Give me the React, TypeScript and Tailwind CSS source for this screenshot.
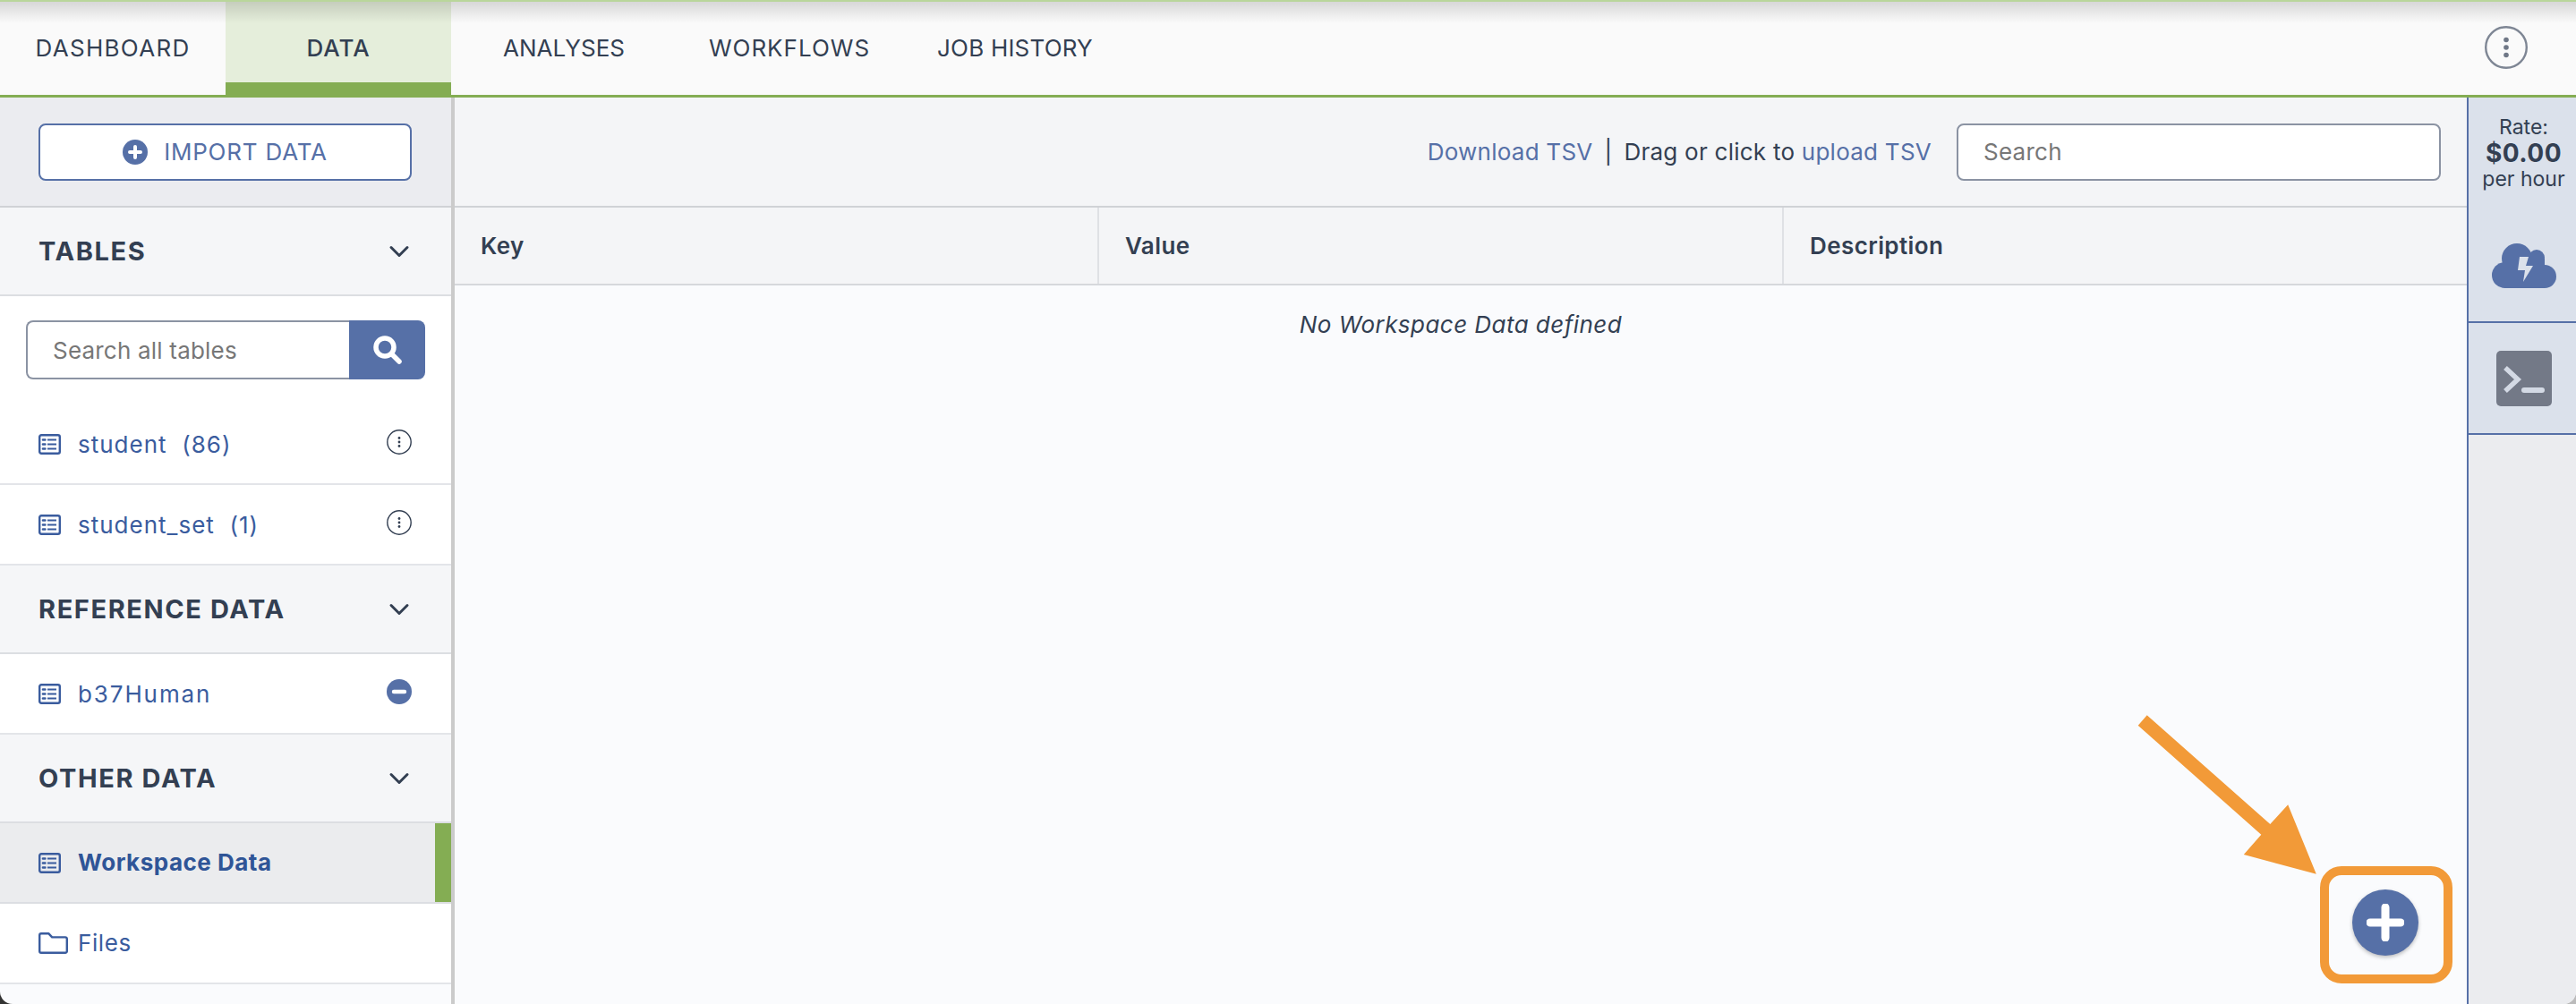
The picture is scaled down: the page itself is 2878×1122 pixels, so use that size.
import React from 'react';
import { ChevronDown } from 'lucide-react';

const font = { fontFamily: 'Inter, "Liberation Sans", sans-serif' };

const tabs = [
  { label: 'DASHBOARD', spacing: 'tracking-[1.3px]' },
  { label: 'DATA', spacing: 'tracking-[1px]' },
  { label: 'ANALYSES', spacing: 'tracking-[0px]' },
  { label: 'WORKFLOWS', spacing: 'tracking-[1px]' },
  { label: 'JOB HISTORY', spacing: 'tracking-[0.2px]' },
];

const TableIcon = () => (
  <svg className="w-[25px] h-[23px] shrink-0" viewBox="0 0 25 23" fill="none" stroke="#3a5c9e">
    <rect x="1.2" y="1.2" width="22.6" height="20.6" rx="2" strokeWidth="2.4" />
    <path d="M10 6.5h10M10 11.5h10M10 16.5h10" strokeWidth="2.2" />
    <path d="M5 6.5h2.4M5 11.5h2.4M5 16.5h2.4" strokeWidth="2.6" strokeLinecap="round" />
  </svg>
);

const FolderIcon = () => (
  <svg className="w-[33px] h-[24px] shrink-0" viewBox="0 0 33 24" fill="none" stroke="#3a5c9e" strokeWidth="2.4" strokeLinejoin="round">
    <path d="M1.2 3a1.8 1.8 0 0 1 1.8-1.8h8.2l4 4.2H30a1.8 1.8 0 0 1 1.8 1.8V21a1.8 1.8 0 0 1-1.8 1.8H3A1.8 1.8 0 0 1 1.2 21z" />
  </svg>
);

const InfoDots = () => (
  <svg className="w-[28px] h-[28px]" viewBox="0 0 28 28" fill="none">
    <circle cx="14" cy="14" r="13.2" stroke="#333f52" strokeWidth="1.4" />
    <circle cx="14" cy="9.5" r="1.4" fill="#333f52" />
    <circle cx="14" cy="14" r="1.4" fill="#333f52" />
    <circle cx="14" cy="18.5" r="1.4" fill="#333f52" />
  </svg>
);

const SectionHeader = ({ label }: { label: string }) => (
  <div className="h-[99px] shrink-0 flex items-center justify-between pl-[43px] pr-[47px] bg-[#f5f6f8] border-b-2 border-[#dcdee2]">
    <span className="text-[29px] font-bold text-[#333f52] tracking-[1.6px]">{label}</span>
    <ChevronDown className="w-[36px] h-[36px] text-[#333f52] -mr-[7px]" strokeWidth={2} />
  </div>
);

const Row = ({ label, count, right, spacing = 'tracking-[1px]' }: { label: string; count?: string; right?: React.ReactNode; spacing?: string }) => (
  <div className="h-[90px] shrink-0 flex items-center justify-between pl-[43px] pr-[47px] bg-white border-b-2 border-[#e3e5e9]">
    <div className="flex items-center gap-[19px]">
      <TableIcon />
      <span className={`text-[26px] text-[#3a5c9e] whitespace-pre ${spacing}`}>
        {label}
        {count && `  ${count}`}
      </span>
    </div>
    <div className="-mt-[4px] -mr-[3px]">{right}</div>
  </div>
);

export default function App() {
  return (
    <div className="w-[2878px] h-[1122px] bg-gradient-to-r from-[#333333] to-[#bbbbbb] overflow-hidden">
      <div style={font} className="relative w-full h-full flex flex-col bg-[#fafbfd] rounded-b-[14px] overflow-hidden">
        {/* top nav */}
        <div className="relative h-[109px] shrink-0 flex items-stretch bg-[#fafafa] border-b-[3px] border-[#84ad53]">
          <div className="absolute inset-x-0 top-0 h-[2px] bg-[#b9d69b] z-10" />
          <div className="absolute inset-x-0 top-0 h-[26px] bg-gradient-to-b from-black/15 to-transparent" />
          {tabs.map(t => (
            <div
              key={t.label}
              className={`w-[252px] shrink-0 flex items-center justify-center text-[26px] text-[#333f52] ${t.spacing} ${t.label === 'DATA' ? 'bg-[#e5eedb] font-medium shadow-[inset_0_-14px_0_#84ad53]' : ''}`}
            >
              {t.label}
            </div>
          ))}
          <div className="ml-auto mr-[54px] self-center">
            <svg className="w-[48px] h-[48px]" viewBox="0 0 48 48" fill="none">
              <circle cx="24" cy="24" r="22.8" stroke="#7e8694" strokeWidth="2.4" />
              <circle cx="24" cy="15.5" r="2.8" fill="#6f7786" />
              <circle cx="24" cy="24" r="2.8" fill="#6f7786" />
              <circle cx="24" cy="32.5" r="2.8" fill="#6f7786" />
            </svg>
          </div>
        </div>

        <div className="flex-1 flex min-h-0">
          {/* sidebar */}
          <div className="w-[508px] shrink-0 flex flex-col border-r-[4px] border-[#cbcbcb]">
            <div className="h-[123px] shrink-0 flex items-center pl-[43px] bg-[#ebecf0] border-b-2 border-[#d0d2d6]">
              <button className="w-[417px] h-[64px] flex items-center justify-center gap-[18px] bg-white border-2 border-[#5670a7] rounded-[8px] text-[26px] tracking-[0.8px] text-[#5670a7]">
                <svg className="w-[28px] h-[28px]" viewBox="0 0 28 28">
                  <circle cx="14" cy="14" r="14" fill="#5670a7" />
                  <path d="M14 8v12M8 14h12" stroke="#fff" strokeWidth="4" strokeLinecap="round" />
                </svg>
                IMPORT DATA
              </button>
            </div>
            <SectionHeader label="TABLES" />
            <div className="h-[121px] shrink-0 pt-[27px] pl-[29px] bg-white">
              <div className="w-[446px] h-[66px] flex">
                <div className="flex-1 flex items-center pl-[28px] border-2 border-r-0 border-[#8b93a3] rounded-l-[8px] text-[26px] tracking-[0.2px] text-[#777] bg-white">
                  Search all tables
                </div>
                <div className="w-[85px] flex items-center justify-center bg-[#5670a7] rounded-r-[8px]">
                  <svg className="w-[32px] h-[32px]" viewBox="0 0 32 32" fill="none" stroke="#fff" strokeWidth="5.5" strokeLinecap="round">
                    <circle cx="13" cy="13" r="10" />
                    <path d="M21 21l8 8" />
                  </svg>
                </div>
              </div>
            </div>
            <Row label="student" count="(86)" right={<InfoDots />} />
            <Row label="student_set" count="(1)" right={<InfoDots />} />
            <SectionHeader label="REFERENCE DATA" />
            <Row
              label="b37Human"
              spacing="tracking-[1.9px]"
              right={
                <svg className="w-[28px] h-[28px]" viewBox="0 0 28 28">
                  <circle cx="14" cy="14" r="14" fill="#5670a7" />
                  <path d="M8 14h12" stroke="#fff" strokeWidth="4.4" strokeLinecap="round" />
                </svg>
              }
            />
            <SectionHeader label="OTHER DATA" />
            <div className="h-[90px] shrink-0 flex items-center gap-[19px] pl-[43px] bg-[#ebecee] border-b-2 border-[#dcdee2] shadow-[inset_-18px_0_0_#84ad53]">
              <TableIcon />
              <span className="text-[26px] tracking-[0.5px] font-bold text-[#2f5597] -mt-[2px]">Workspace Data</span>
            </div>
            <div className="h-[90px] shrink-0 flex items-center gap-[11px] pl-[43px] bg-white border-b-2 border-[#e3e5e9]">
              <FolderIcon />
              <span className="text-[26px] text-[#3a5c9e] tracking-[0.6px] -mt-[2px]">Files</span>
            </div>
          </div>

          {/* main panel */}
          <div className="flex-1 flex flex-col min-w-0">
            <div className="h-[123px] shrink-0 flex items-center justify-end pr-[29px] bg-[#f4f5f7] border-b-2 border-[#d0d2d6] text-[26px] tracking-[0.25px] text-[#333f52]">
              <span className="text-[#5670a7]">Download TSV</span>
              <span className="mx-[13px]">|</span>
              <span>Drag or click to&nbsp;</span>
              <span className="text-[#5670a7]">upload TSV</span>
              <div className="ml-[28px] w-[541px] h-[64px] flex items-center pl-[28px] bg-white border-2 border-[#8b93a3] rounded-[8px] text-[#777]">
                Search
              </div>
            </div>
            <div className="h-[87px] shrink-0 grid grid-cols-[718px_765px_1fr] bg-[#f4f5f7] border-b-2 border-[#d6d8dc] text-[26px] tracking-[0.4px] font-semibold text-[#333f52]">
              <div className="flex items-center pl-[29px]">Key</div>
              <div className="flex items-center pl-[29px] border-l-2 border-[#dfe1e5]">Value</div>
              <div className="flex items-center pl-[29px] border-l-2 border-[#dfe1e5]">Description</div>
            </div>
            <div className="h-[87px] shrink-0 flex items-center justify-center text-[26px] tracking-[0.45px] italic text-[#333f52]">
              No Workspace Data defined
            </div>
          </div>

          {/* cost rail */}
          <div className="w-[122px] shrink-0 flex flex-col bg-[#ebecef] border-l-2 border-[#5670a7] text-[#333f52]">
            <div className="h-[252px] shrink-0 flex flex-col items-center pt-[19px] pl-[3px] bg-[#dbe1eb] border-b-2 border-[#5670a7]">
              <span className="text-[23px] leading-[29px]">Rate:</span>
              <span className="text-[28px] leading-[29px] tracking-[0.5px] font-bold">$0.00</span>
              <span className="text-[23px] leading-[29px]">per hour</span>
              <svg className="w-[72px] h-[50px] mt-[57px]" viewBox="0 0 72 50" fill="#5670a7">
                <circle cx="28" cy="17" r="17" />
                <circle cx="50" cy="16" r="9" />
                <circle cx="14.5" cy="35.5" r="14.5" />
                <circle cx="59" cy="37" r="13" />
                <rect x="14" y="17" width="45" height="33" />
                <polygon points="31,15 41,15 38,25 46,25 35,43 37,30 29,30" fill="#dbe1eb" />
              </svg>
            </div>
            <div className="h-[125px] shrink-0 flex items-center justify-center pl-[3px] bg-[#dbe1eb] border-b-2 border-[#5670a7]">
              <svg className="w-[62px] h-[62px]" viewBox="0 0 62 62" fill="none">
                <rect width="62" height="62" rx="5" fill="#737987" />
                <path d="M10 19l14 13-14 13" stroke="#d3d9e4" strokeWidth="5.5" />
                <path d="M31 44h20" stroke="#d3d9e4" strokeWidth="6" strokeLinecap="round" />
              </svg>
            </div>
          </div>

          {/* add button, with the orange call-out box round it */}
          <div className="absolute right-[138px] bottom-[23px] w-[148px] h-[131px] border-[10px] border-[#f29a38] rounded-[24px]" />
          <button className="absolute right-[176px] bottom-[54px] w-[74px] h-[74px] flex items-center justify-center bg-[#5670a7] rounded-full shadow-[0_2px_4px_rgba(0,0,0,0.25)]">
            <svg className="w-[42px] h-[42px]" viewBox="0 0 42 42">
              <path d="M21 4v34M4 21h34" stroke="#fff" strokeWidth="9" strokeLinecap="round" />
            </svg>
          </button>
          <svg className="absolute inset-0 w-full h-full pointer-events-none" viewBox="0 0 2878 1122">
            <polygon
              points="2388.7,810.7 2398.7,799.3 2536.3,921 2556.2,899.3 2587.8,976.7 2506.8,955 2526.3,932.7"
              fill="#f29a38"
            />
          </svg>
        </div>
      </div>
    </div>
  );
}
